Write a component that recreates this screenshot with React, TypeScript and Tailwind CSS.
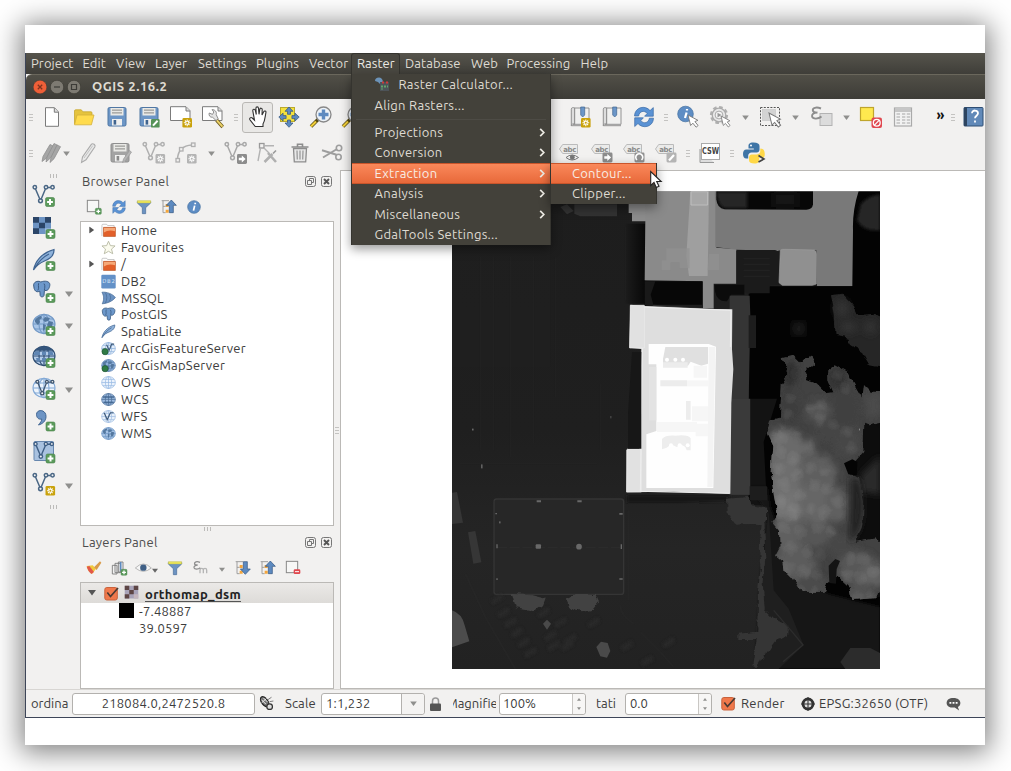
import React from "react";

type Kids = { children?: React.ReactNode };

const Ico = ({ children, className = "w-6 h-6" }: Kids & { className?: string }) => (
  <svg viewBox="0 0 24 24" className={`${className} shrink-0 overflow-visible`} fill="none">
    {children}
  </svg>
);

/* ---------- badges ---------- */
const Plus = ({ x = 14, y = 14, s = 1 }) => (
  <g transform={`translate(${x} ${y}) scale(${s})`}>
    <rect x="0" y="0" width="9" height="9" rx="1.6" fill="#5b9a5b" stroke="#4a834b" strokeWidth=".6" />
    <path d="M4.5 1.6v5.8M1.6 4.5h5.8" stroke="#fff" strokeWidth="2" />
  </g>
);
const Star = ({ x = 14, y = 14, gray = false }) => (
  <g transform={`translate(${x} ${y})`}>
    <rect width="9.6" height="9.6" rx="1.4" fill={gray ? "#b4b4b4" : "#c9a20c"} />
    <path d="M4.8 1.4v6.8M1.4 4.8h6.8M2.5 2.5l4.6 4.6M7.1 2.5L2.5 7.1" stroke="#fff" strokeWidth="1.1" />
    <circle cx="4.8" cy="4.8" r="1" fill={gray ? "#b4b4b4" : "#c9a20c"} />
  </g>
);
const ArrowBadge = ({ x = 13, y = 13 }) => (
  <g transform={`translate(${x} ${y})`}>
    <rect width="10" height="10" rx="1.4" fill="#8c8c8c" />
    <path d="M1.8 3.8h3V1.6L8.6 5 4.8 8.4V6.2h-3z" fill="#fff" />
  </g>
);
const VNodes = ({ c = "#4a6785" }) => (
  <g stroke={c} strokeWidth="1.5" fill="#f2f1f0">
    <path d="M3.3 4.5L8 15.5M9 15.5L13.5 4.8M16 3.6h3.5" fill="none" />
    <circle cx="2.8" cy="3.2" r="1.7" />
    <circle cx="14" cy="3.2" r="1.7" />
    <circle cx="20.5" cy="3.2" r="1.7" />
    <circle cx="8.5" cy="16.8" r="1.9" />
  </g>
);
const Globe = ({ fill = "#dbe8f7", line = "#5b87bd" }) => (
  <g stroke={line} strokeWidth="1.1" fill="none">
    <ellipse cx="12" cy="12" rx="11" ry="9.6" fill={fill} />
    <ellipse cx="12" cy="12" rx="5" ry="9.6" />
    <path d="M1 12h22M3 7h18M3 17h18M12 2.4v19.2" />
  </g>
);

/* ---------- main toolbar icons ---------- */
const NewDoc = () => (
  <Ico>
    <path d="M5.5 2.7h9l4 4.3v14.3h-13z" fill="#fff" stroke="#7b7b7b" />
    <path d="M14.3 3v4.2h4" fill="#ddd" stroke="#7b7b7b" />
  </Ico>
);
const Folder = () => (
  <Ico>
    <path d="M2.5 19V6q0-1.2 1.2-1.2h5.6l1.6 2H19q1 0 1 1.2v2" fill="#e5c33d" stroke="#c8a72e" strokeWidth=".8" />
    <path d="M2.5 19.8L5 10h17l-2.6 9.8z" fill="#ffdb4d" stroke="#d3b03a" strokeWidth=".8" />
  </Ico>
);
const Floppy = ({ gray = false, edit = false }) => {
  const c = gray ? "#a3a3a3" : "#6d96c6";
  return (
    <Ico>
      <rect x="3" y="2.5" width="18" height="18.5" rx="1.5" fill={c} stroke={gray ? "#8f8f8f" : "#4f76a3"} />
      <rect x="5.5" y="3" width="13" height="7.5" fill="#e9e9e6" />
      <path d="M7 5.2h10M7 7.8h10" stroke="#9b9b98" strokeWidth="1.2" />
      <rect x="7" y="14" width="10" height="6.5" fill="#f0f0ef" />
      <rect x="8.6" y="15" width="2.6" height="4.6" fill={gray ? "#8a8a8a" : "#40648f"} />
      {edit && !gray && (
        <g>
          <rect x="14" y="14" width="8.6" height="8.6" rx="1.2" fill="#559258" />
          <path d="M16 20.6l4.6-4.8" stroke="#fff" strokeWidth="2" />
        </g>
      )}
      {gray && <path d="M14.5 21.5l1-3.5 6-8.5 2 1.6-6 8.5z" fill="#b5b5b5" stroke="#999" strokeWidth=".7" />}
    </Ico>
  );
};
const Composer = () => (
  <Ico>
    <path d="M1.5 1.7H17l4 4V15.5H1.5z" fill="#fff" stroke="#7b7b7b" />
    <path d="M17 2v4h4" stroke="#7b7b7b" fill="#ddd" />
    <Star x={13.4} y={13} />
  </Ico>
);
const ComposerMgr = () => (
  <Ico>
    <path d="M1.5 1.7H17l4 4V15.5H1.5z" fill="#fff" stroke="#7b7b7b" />
    <path d="M17 2v4h4" stroke="#7b7b7b" fill="#ddd" />
    <path d="M15.5 15l6.2 7" stroke="#6d5a1c" strokeWidth="3.4" />
    <path d="M15.7 15.2l5.8 6.4" stroke="#edd36a" strokeWidth="2" />
    <path d="M8.2 8l3.3 1.4L12.8 7 11 4.6c3 0 5 2.2 4.2 5l2 4.2-2.2 1.7-3.4-3.2C9 12.5 7.5 10.5 8.2 8z" fill="#e4e4e4" stroke="#777" strokeWidth=".8" />
  </Ico>
);
const Hand = () => (
  <Ico>
    <path
      d="M9.2 21.5L4 14.8c-1-1.4.8-3 2.2-1.8l2.3 2.2L6.8 5.8c-.2-1.9 2.1-2.2 2.5-.4L10.300 9.500 9.900 3.300c0-1.900 2.500-1.900 2.600 0L13 9.300l.8-5c.3-1.700 2.500-1.400 2.400.3L16 10l1.700-3.300c.8-1.400 2.600-.6 2.200.9-.9 4.500-.8 8-2.900 11.400v2.500z"
      fill="#fff" stroke="#333" strokeWidth="1.1" />
  </Ico>
);
const PanTo = () => (
  <Ico>
    <rect x="3.5" y="2.5" width="14" height="14" fill="#f4e13c" stroke="#b9a92e" />
    <g fill="#5d8ac0" stroke="#33557d" strokeWidth=".7">
      <path d="M12 22.3l-4-4.300h2.500v-3h3v3H16z" />
      <path d="M12 2l-4 4.300h2.500v3h3v-3H16z" />
      <path d="M1.800 12.100l4.300-4v2.500h3v3h-3v2.500z" />
      <path d="M22.200 12.100l-4.300-4v2.500h-3v3h3v2.500z" />
    </g>
  </Ico>
);
const ZoomIn = () => (
  <Ico>
    <path d="M2 21.500l7-7" stroke="#54480f" strokeWidth="3.600" />
    <path d="M2 21.500l5-5" stroke="#f2cf38" strokeWidth="2.200" />
    <circle cx="14.500" cy="9.500" r="7.500" fill="#eef3f8" stroke="#888" strokeWidth="1.300" />
    <path d="M14.500 4.500v10M9.500 9.500h10" stroke="#5d8ac0" strokeWidth="3.400" />
  </Ico>
);
const Locker = () => (
  <Ico>
    <path d="M9 18V10a6.500 8 0 0 1 12 0v8" fill="#ececec" stroke="#999" />
    <rect x="13" y="13" width="9.500" height="9.500" fill="#aaa" />
    <path d="M16 15l3 2.700-3 2.800" stroke="#fff" strokeWidth="1.600" />
  </Ico>
);
const Bookmark = ({ star = false }) => (
  <Ico>
    <path d="M3.300 4.200c0-1.800 2-1.800 3.400-1.300V19H5c-1 0-1.700.8-1.700 1.700z" fill="#ddd" stroke="#888" strokeWidth=".9" />
    <path d="M5 19.300h16V3H6.700v16.300M3.300 20.700h17.700" fill="#f0f0ef" stroke="#888" strokeWidth=".9" />
    <path d="M12.700 2h4v8l-2 2-2-2z" fill="#6b96c8" stroke="#41658f" strokeWidth=".7" />
    {star && <Star x={13} y={13} />}
  </Ico>
);
const Refresh = ({ className = "w-6 h-6" }) => (
  <Ico className={className}>
    <g fill="#5a92d4" stroke="#3c6ba6" strokeWidth=".7">
      <path d="M2.500 11C2.800 1.800 13.500-.2 18 5.600l3.300-3v8.600h-8.700l2.700-2.800C12 5 7.500 6 6.600 11z" />
      <path d="M21.500 13.200c-.3 9-11 11-15.500 5.300l-3.300 3v-8.700h8.700l-2.700 2.900c3.300 3.400 7.800 2.400 8.700-2.500z" />
    </g>
  </Ico>
);
const Cursor = ({ t = "translate(12 10)" }) => (
  <path transform={t} d="M0 0l2.600 10.500 2.300-2.300 3.200 4 2-1.700-3.200-3.900 3-1.300z" fill="#fff" stroke="#777" strokeWidth=".9" />
);
const Identify = () => (
  <Ico>
    <circle cx="9.500" cy="9" r="7.800" fill="#5e8dc4" stroke="#44709f" strokeWidth=".7" />
    <path d="M10.600 7.500L9 13M11 4v1.500" stroke="#fff" strokeWidth="2.200" />
    <Cursor />
  </Ico>
);
const Gear = () => (
  <Ico>
    <circle cx="11" cy="10" r="7.800" stroke="#b0b0b0" strokeWidth="2.600" strokeDasharray="3.600 2.500" />
    <circle cx="11" cy="10" r="6.800" fill="#e8e8e8" stroke="#aaa" strokeWidth="1.300" />
    <circle cx="11" cy="10" r="3.900" fill="#f4f4f4" stroke="#aaa" />
    <path d="M9.500 7.800l4 2.300-4 2.300z" fill="#999" />
    <Cursor t="translate(13 11) scale(.9)" />
  </Ico>
);
const SelectRect = () => (
  <Ico>
    <rect x="2.500" y="2.500" width="19" height="18" stroke="#555" strokeDasharray="2 1.300" />
    <rect x="4.500" y="4.500" width="13" height="11" fill="#d3d3d3" stroke="#bbb" strokeWidth=".5" />
    <Cursor t="translate(11 8) scale(1.150)" />
  </Ico>
);
const Eps = ({ className = "w-6 h-6", second = false }) => (
  <Ico className={className}>
    {second ? (
      <path d="M12 20v-5q0-2.500 2.500-2.500t2.500 2.500v5M17 20v-5q0-2.500 2.500-2.500t2.500 2.500v5" stroke="#b5b5b5" strokeWidth="2" />
    ) : (
      <rect x="11" y="8.500" width="12" height="12" fill="#dcdcdc" stroke="#b3b3b3" />
    )}
    <path d="M12 3.500C7 1.500 3.500 3 3.800 5.400 4 7 6 7.700 8.500 7.600 4.500 7.700 2.600 9.500 3.100 11.600c.7 2.600 6 2.800 9.400 0" stroke="#8d8d8d" strokeWidth="1.900" />
  </Ico>
);
const Deselect = () => (
  <Ico>
    <rect x="1.500" y="2.500" width="13" height="13" fill="#ffe94f" stroke="#bfa52c" strokeWidth="1.200" />
    <rect x="12.500" y="12.500" width="10.500" height="10.500" rx="2" fill="#e04850" />
    <circle cx="17.750" cy="17.750" r="3.400" stroke="#fff" strokeWidth="1.300" />
    <path d="M15.400 20.100l4.700-4.700" stroke="#fff" strokeWidth="1.300" />
  </Ico>
);
const Table = () => (
  <Ico>
    <rect x="3.500" y="3" width="17" height="18" fill="#f2f2f2" stroke="#aaa" strokeWidth="1.200" />
    <path d="M4 5.500h16" stroke="#c6c6c6" strokeWidth="3" />
    <path d="M5.500 9h3.500M11 9h3.300M15.800 9h3.300M5.500 12h3.500M11 12h3.300M15.800 12h3.300M5.500 15h3.500M11 15h3.300M15.800 15h3.300M5.500 18h3.500M11 18h3.300M15.800 18h3.300" stroke="#a6a6a6" strokeWidth="1.200" />
  </Ico>
);
const HelpBook = () => (
  <Ico>
    <rect x="3" y="2.500" width="19" height="18.500" rx=".8" fill="#6189b8" stroke="#2f4e74" />
    <rect x="3" y="2.500" width="3" height="18.500" fill="#2d4460" />
    <path d="M11 8.300c0-3.800 6-3.600 6 0 0 2.400-3 2.400-3 5M14 15.500v2" stroke="#fff" strokeWidth="1.800" />
  </Ico>
);

/* ---------- digitizing toolbar icons ---------- */
const Pencils = () => (
  <Ico>
    <g fill="#a6a6a6" stroke="#8f8f8f" strokeWidth=".8">
      <path d="M3 20.500l1-5L11 3.500l3.500 1.700-7 12z" />
      <path d="M7 21l1-5L15 2.500l3.500 1.700-7 12.800z" />
      <path d="M11 21.500l1-5L18 4l3.500 1.700-6.500 12z" />
    </g>
  </Ico>
);
const Pencil = () => (
  <Ico>
    <path d="M5.500 21.500l1-5.500L15.500 3.200q1-1 2.600 0 1.500 1.200.8 2.600L10 18.800z" fill="#e9e9e9" stroke="#aaa" strokeWidth="1.100" />
    <path d="M8 17L16.800 4.600" stroke="#c3c3c3" />
  </Ico>
);
const AddV = () => (
  <Ico>
    <VNodes c="#b0b0b0" />
    <Star x={13.500} y={13} gray />
  </Ico>
);
const Curve = () => (
  <Ico>
    <path d="M3.500 18C4 9 9 4.500 18 4" stroke="#b0b0b0" strokeWidth="1.500" />
    <g fill="#f2f1f0" stroke="#b0b0b0" strokeWidth="1.300">
      <rect x="2" y="17.500" width="3.500" height="3.500" />
      <rect x="17.500" y="2" width="3.500" height="3.500" />
      <rect x="5.500" y="6.500" width="3.500" height="3.500" />
    </g>
    <Star x={13} y={13} gray />
  </Ico>
);
const MoveV = () => (
  <Ico>
    <VNodes c="#a8a8a8" />
    <ArrowBadge x={13} y={13} />
  </Ico>
);
const NodeTool = () => (
  <Ico>
    <rect x="3.500" y="2.500" width="4.500" height="4.500" stroke="#999" strokeWidth="1.300" />
    <path d="M8 4.700h10M4.500 7L2 20M8 7l5 5" stroke="#b3b3b3" strokeWidth="1.400" />
    <path d="M8.500 21l8-8M12 12l8 9" stroke="#b0b0b0" strokeWidth="2.600" />
    <path d="M17 12.500l3-3" stroke="#999" strokeWidth="1.600" />
  </Ico>
);
const Trash = () => (
  <Ico>
    <path d="M5.500 7.500l.8 13.300h11.400l.8-13.300z" fill="#e8e8e8" stroke="#8d8d8d" strokeWidth="1.300" />
    <path d="M3.500 6h17M9.500 5.500V3.300h5v2.200" stroke="#8d8d8d" strokeWidth="1.600" />
    <path d="M9 9.500l.3 9M12 9.500v9M15 9.500l-.3 9" stroke="#9b9b9b" strokeWidth="1.300" />
  </Ico>
);
const Scissors = () => (
  <Ico>
    <path d="M2 9.300l14.500 4.500M3 16.500l14-8.500" stroke="#9e9e9e" strokeWidth="2" />
    <circle cx="19" cy="7" r="2.700" stroke="#9e9e9e" strokeWidth="1.600" />
    <circle cx="18.500" cy="16" r="2.700" stroke="#9e9e9e" strokeWidth="1.600" />
  </Ico>
);
const AbcLabel = ({ kind }: { kind: "eye" | "move" | "rotate" | "edit" }) => (
  <Ico>
    <path d="M1.500 8L4.700 3.500h14.800v9H4.700z" fill="#ebebea" stroke="#bbb" />
    <text x="5.300" y="11" fontSize="7" fontFamily="DejaVu Sans" fontWeight="700" fill="#888" textLength="13">abc</text>
    {kind === "eye" && (
      <g stroke="#777">
        <path d="M8 16.500q6-5 12.500 0-6.500 5-12.500 0z" fill="#f2f2f2" />
        <circle cx="14.300" cy="16.300" r="2" fill="#777" />
      </g>
    )}
    {kind === "move" && <ArrowBadge x={12.500} y={11.500} />}
    {kind === "rotate" && (
      <g>
        <rect x="12.500" y="11.500" width="10" height="10" rx="1.400" fill="#909090" />
        <path d="M15 19a3.500 3.500 0 1 1 4.500 0" stroke="#fff" strokeWidth="1.600" />
      </g>
    )}
    {kind === "edit" && (
      <g>
        <rect x="12.500" y="11.500" width="10" height="10" rx="1.400" fill="#b4b4b4" />
        <path d="M15 19.500l5-5.500" stroke="#fff" strokeWidth="2.200" />
      </g>
    )}
  </Ico>
);
const Csw = () => (
  <Ico>
    <path d="M2 8v13.500h14" fill="#ddd" stroke="#999" />
    <rect x="3.500" y="2.500" width="18" height="16" fill="#fff" stroke="#aaa" />
    <text x="4" y="13.400" fontSize="8" fontFamily="DejaVu Sans" fontWeight="700" fill="#444" textLength="17" lengthAdjust="spacingAndGlyphs">CSW</text>
  </Ico>
);
const Python = () => (
  <Ico>
    <path d="M11.500 1.500c-4.500 0-5 2-5 3.500v2.500h5.300v1H4.500c-2.500 0-3.500 2-3.500 4.500s1 4.500 3.300 4.500h1.900v-2.700c0-2 1.500-3.300 3.400-3.300h5.200c1.500 0 2.700-1.200 2.700-2.800V5c0-2.300-2-3.500-6-3.500z" fill="#3f75a6" />
    <circle cx="9" cy="4.600" r="1" fill="#fff" />
    <path d="M18.300 7.500v2.600c0 2.100-1.500 3.300-3.400 3.300H9.700c-1.500 0-2.700 1.200-2.700 2.800v3c0 2.300 2.200 3.300 5.200 3.300 4.500 0 5-2 5-3.300v-2.400h4c1 0 1.800-2 1.500-4.600-.3-3-1.500-4.700-4.400-4.700z" fill="#ffd848" />
    <path d="M16.500 14.500l5.500 3.500-5.500 3" stroke="#444" strokeWidth="1.600" />
  </Ico>
);

/* ---------- small widgets ---------- */
const Handle = ({ className }: { className: string }) => (
  <div className={`${className} shrink-0 flex flex-col items-center gap-[2px]`}>
    <i className="block w-1 h-px bg-[#c4c3c1]" />
    <i className="block w-1 h-px bg-[#c4c3c1]" />
    <i className="block w-1 h-px bg-[#c4c3c1]" />
  </div>
);
const HHandle = ({ className }: { className: string }) => (
  <div className={`${className} shrink-0 flex justify-center items-center gap-[2px]`}>
    <i className="block h-1 w-px bg-[#bcbbb9]" />
    <i className="block h-1 w-px bg-[#bcbbb9]" />
    <i className="block h-1 w-px bg-[#bcbbb9]" />
  </div>
);
const Caret = ({ className = "w-[7px] h-[5px]", color = "#8f8f8d" }) => (
  <svg viewBox="0 0 8 6" className={`${className} shrink-0`}>
    <path d="M0 .5h8L4 6z" fill={color} />
  </svg>
);
const Tool = ({ children, w = "w-8" }: Kids & { w?: string }) => (
  <div className={`${w} shrink-0 flex items-center justify-center`}>{children}</div>
);

/* ---------- data source icons ---------- */
const RasterTiles = ({ a = "#2b4568", b = "#6d94c4", c = "#9ab9dd" }) => (
  <g>
    <rect x="1" y="1" width="18" height="17" fill={b} />
    <path d="M1 1h6v5.700H1zM13 1h6v5.700h-6zM7 6.700h6v5.600H7zM1 12.300h6V18H1z" fill={a} />
    <path d="M13 12.300h6V18h-6z" fill={c} />
  </g>
);
const Feather = () => (
  <path d="M1.500 22C3 14 9 5 22 1.500c.4 5-3 9-9.500 11.500-4 1.600-7 3-11 9zM3 19.500C7 13 12 8.500 17 6" fill="#8fb2da" stroke="#3f6491" strokeWidth="1.200" />
);
const Elephant = () => (
  <path d="M2 6c1-5 7-5 9-3.500C16 .5 22 1.500 22.300 5.500 22.500 9 20 13 18.500 13l-3 .2-.5 6c-.3 2.500-4.500 2.500-4.800 0L9.800 14C6 15.500 4 14.500 2.600 10.500zM8.300 4c-1 4 1 6-1 9M15 4.500c2 3 .5 6 .5 8" fill="#6d98cb" stroke="#37587f" strokeWidth="1.200" />
);
const Mainland = () => (
  <path d="M3 8q3-4 6-4l1 2-3 2 1 2-2 3-3-3zM13 5l5 1-2 3-3 1-2-2zM17 9l4 1-1 5-3 2-2-4zM11 12l3 1-1 4-2 2z" fill="#54789f" />
);
const sideIcons: [React.ReactNode, boolean][] = [
  [<><VNodes /><Plus x={13.500} y={13.500} /></>, false],
  [<><RasterTiles /><Plus x={14} y={13.500} /></>, false],
  [<><Feather /><Plus x={14} y={13.500} /></>, false],
  [<><g transform="scale(.8)"><Elephant /></g><Plus x={14} y={13.500} /></>, true],
  [<><Globe fill="#a9c6e8" line="#7399c6" /><Mainland /><Plus x={14} y={14.500} /></>, true],
  [<><Globe fill="#b5cdea" line="#2e4d72" /><path d="M3 7.500h5v3.500H1.500zM10 7.500h4V11h-4zM16 7.500h4.500l1 3.500H16zM4 14h4v3.500H5zM10 14h4v3.500h-4z" fill="#5f86b4" /><path d="M3 6.500q4-4.300 9-4.300t9 4.300z" fill="#34557c" /><Plus x={14} y={14.500} /></>, false],
  [<><Globe fill="#edf4fc" line="#84aad6" /><g transform="translate(3 3) scale(.85)"><VNodes c="#3f5670" /></g><Plus x={14} y={14.500} /></>, true],
  [<><path d="M4.500 6.500C4.500 1 14 1 14 8.500 14 13.500 10 16 6.500 17c2-2.500 3.500-4.500 3.200-6C6.500 11.800 4.500 9.500 4.500 6.500z" fill="#6d94c4" stroke="#3f6491" /><Plus x={14} y={14} /></>, false],
  [<><rect x="2" y="1.500" width="19.500" height="19" rx="1" fill="#a9c2e0" stroke="#6787ae" /><g transform="translate(1 1) scale(.92)"><VNodes c="#3f5f85" /></g><Plus x={14} y={14} /></>, false],
  [<><VNodes /><Star x={13.500} y={14} /></>, true],
];

const OrangeFolder = () => (
  <g>
    <path d="M1.500 21V3.500q0-1.500 1.500-1.500h6l1.500 2H21v16" fill="#fff" stroke="#aaa" />
    <path d="M4 7h19v14.500H4z" fill="#e2602a" stroke="#b64a17" />
    <path d="M4.600 8h17.800v5Q12 10 4.600 15z" fill="#f6a877" />
  </g>
);
const GreenDot = () => <circle cx="6.500" cy="17" r="5" fill="#2f7a45" stroke="#1d5230" />;
const treeRows: { label: string; icon: React.ReactNode; arrow?: boolean }[] = [
  { label: "Home", icon: <OrangeFolder />, arrow: true },
  { label: "Favourites", icon: <path d="M12 2l3 7 7.500.5-5.700 5 2 7.500-6.800-4-6.800 4 2-7.500-5.700-5L9 9z" fill="#fbfbee" stroke="#b5b7a0" strokeWidth="1.400" /> },
  { label: "/", icon: <OrangeFolder />, arrow: true },
  { label: "DB2", icon: <><rect x=".5" y="1" width="23" height="22" rx="2" fill="#6391c8" /><text x="2" y="14.500" fontSize="8.500" fontFamily="DejaVu Sans" fill="#dbe8f6" textLength="20">DB2</text></> },
  { label: "MSSQL", icon: <path d="M1.500 2C9 1 19 5 23 10.500 18 17 9 20 2 20.500 5 14 5 8 1.500 2zM7 2.500c3 5 3 11 0 17M13 4.500c3 4 3 8 0 12.500" fill="#6b92c2" stroke="#4a6d98" strokeWidth="1.200" /> },
  { label: "PostGIS", icon: <Elephant /> },
  { label: "SpatiaLite", icon: <Feather /> },
  { label: "ArcGisFeatureServer", icon: <><Globe fill="#e2edf9" line="#8db0da" /><path d="M9 6l4 9 4-10h4" stroke="#3d5878" strokeWidth="1.800" /><GreenDot /></> },
  { label: "ArcGisMapServer", icon: <><Globe fill="#8fb1da" line="#6488b5" /><Mainland /><GreenDot /></> },
  { label: "OWS", icon: <Globe fill="#eaf2fc" line="#94b7e2" /> },
  { label: "WCS", icon: <><Globe fill="#9dbbe0" line="#4d6f98" /><path d="M3 7h18v3H3zM4 15h16v3H5z" fill="#3b5f8a" opacity=".7" /></> },
  { label: "WFS", icon: <><Globe fill="#e8f1fb" line="#9dbbe0" /><path d="M5 6l5 11 5-11h5" stroke="#3d5878" strokeWidth="1.900" /></> },
  { label: "WMS", icon: <><Globe fill="#a5c2e4" line="#6f96c5" /><Mainland /></> },
];

const PanelTitle = ({ title }: { title: string }) => (
  <div className="h-5 flex items-center justify-between pl-[2px] pr-[2px]">
    <span className="text-[13px] text-[#4c4c4c] leading-5 tracking-[0.25px]">{title}</span>
    <span className="flex gap-[5px]">
      <svg viewBox="0 0 11 11" className="w-[11px] h-[11px]" fill="none" stroke="#777">
        <rect x=".5" y=".5" width="10" height="10" rx="2" />
        <path d="M2.500 4.500h4v4h-4zM4.500 4.500v-2h4v4h-2" />
      </svg>
      <svg viewBox="0 0 11 11" className="w-[11px] h-[11px]" fill="none" stroke="#777">
        <rect x=".5" y=".5" width="10" height="10" rx="2" />
        <path d="M3 3l5 5M8 3L3 8" stroke="#555" strokeWidth="1.900" />
      </svg>
    </span>
  </div>
);

const Funnel = () => (
  <>
    <path d="M2 4h20v2l-7.500 7v9h-5v-9L2 6z" fill="#6c93c2" stroke="#476b97" />
    <path d="M2 2.500h20v3.500H2z" fill="#ece65a" stroke="#b7b042" strokeWidth=".6" />
  </>
);
const TreeArrow = ({ down = false }) => (
  <>
    <path d="M1 2.500h11M3 2.500v18h4M3 11h4" stroke="#999" strokeWidth="1.400" />
    <path d="M7 7.500h4.500v4.500H7zM7 16h4.500v4.500H7z" fill="#f4a63c" />
    <path transform={down ? "translate(0 23) scale(1 -1)" : undefined} d="M15.500 1.500l7.500 8h-4.500v11h-6v-11H8z" fill="#5d8ac0" stroke="#2f527c" />
  </>
);
const Info = () => (
  <>
    <circle cx="12" cy="12" r="9.500" fill="#5e8dc4" stroke="#44709f" />
    <path d="M13 10l-1.800 7.500M13.800 5.500v2.500" stroke="#fff" strokeWidth="2.600" />
  </>
);
const Check = () => (
  <svg viewBox="0 0 15 15" className="w-[15px] h-[15px] shrink-0 overflow-visible" fill="none">
    <rect x=".8" y="1.500" width="12.500" height="12.500" rx="2" fill="#f0784b" stroke="#c9623c" />
    <path d="M3.300 6.500l3.200 4L14 2" stroke="#4a3a33" strokeWidth="1.700" />
  </svg>
);

/* ---------- elevation raster ---------- */
const canopy: [number, number, number, number, string][] = [
  [215, 210, 38, 34, "#555"], [120, 200, 34, 60, "#3c3c3c"], [270, 110, 32, 38, "#333"], [125, 95, 24, 40, "#2f2f2f"],
  [290, 210, 40, 50, "#3f3f3f"], [300, 300, 40, 50, "#474747"], [240, 270, 40, 30, "#444"],
  [110, 330, 60, 70, "#6a6a6a"], [120, 430, 60, 80, "#6e6e6e"], [125, 500, 50, 46, "#747474"], [185, 318, 18, 24, "#6a6a6a"],
  [210, 400, 60, 60, "#5f5f5f"], [210, 490, 60, 60, "#666"], [270, 490, 40, 50, "#606060"], [320, 480, 26, 80, "#3c3c3c"],
  [130, 580, 60, 50, "#616161"], [210, 580, 60, 40, "#575757"], [140, 670, 66, 56, "#5c5c5c"], [190, 740, 60, 40, "#4c4c4c"],
  [280, 610, 50, 30, "#464646"], [330, 680, 60, 50, "#585858"], [380, 700, 36, 36, "#636363"], [330, 770, 50, 40, "#525252"],
  [378, 190, 26, 36, "#4c4c4c"], [375, 400, 30, 40, "#333"],
];
const domes: [number, number, number][] = [
  [100, 290, 26], [100, 330, 22], [140, 350, 24], [95, 380, 22], [150, 400, 24], [110, 430, 26], [190, 380, 22],
  [230, 390, 20], [200, 430, 22], [160, 460, 22], [240, 440, 22], [100, 480, 24], [140, 510, 28], [190, 500, 20],
  [230, 510, 24], [270, 480, 22], [110, 560, 20], [160, 570, 24], [210, 560, 22], [250, 570, 20], [130, 620, 24],
  [180, 630, 22], [220, 640, 22], [120, 680, 26], [170, 690, 24], [210, 700, 20], [160, 745, 20], [200, 750, 20],
  [310, 650, 22], [350, 650, 24], [300, 700, 22], [340, 710, 24], [380, 690, 22], [330, 770, 24], [370, 760, 20],
  [190, 200, 18], [220, 190, 22], [220, 230, 22], [130, 170, 20], [120, 220, 20], [270, 100, 20], [290, 140, 20],
  [300, 270, 22], [310, 320, 22], [260, 250, 20],
];
const cars: [number, number][] = [
  [170, 1300], [190, 1330], [210, 1360], [230, 1390], [250, 1420], [290, 1300], [310, 1370], [340, 1330], [370, 1380],
  [440, 1330], [540, 1400], [320, 1400], [150, 1260], [360, 1400], [665, 1390], [600, 1445],
];
const Raster = () => (
  <svg viewBox="35 32 1284 1434" preserveAspectRatio="none" className="w-[428px] h-[478px] block">
    <defs>
      <filter id="soft"><feGaussianBlur stdDeviation="12" /></filter>
      <filter id="softer"><feGaussianBlur stdDeviation="4" /></filter>
      <filter id="canopyBlur" x="-20%" y="-20%" width="140%" height="140%"><feGaussianBlur stdDeviation="11" /></filter>
      <filter id="ragged" x="-5%" y="-5%" width="110%" height="110%">
        <feTurbulence type="fractalNoise" baseFrequency=".035" numOctaves="2" seed="4" result="n" />
        <feDisplacementMap in="SourceGraphic" in2="n" scale="20" xChannelSelector="R" yChannelSelector="G" />
      </filter>
      <linearGradient id="ground" x1="0" y1="0" x2="0" y2="1">
        <stop offset="0" stopColor="#1d1d1d" /><stop offset=".5" stopColor="#1f1f1f" />
        <stop offset=".75" stopColor="#252525" /><stop offset="1" stopColor="#222" />
      </linearGradient>
      <linearGradient id="edge" x1="0" y1="0" x2="1" y2="0">
        <stop offset="0" stopColor="#1c1c1c" /><stop offset="1" stopColor="#080808" />
      </linearGradient>
      <radialGradient id="dome">
        <stop offset="0" stopColor="#fff" stopOpacity=".07" /><stop offset=".7" stopColor="#fff" stopOpacity=".035" /><stop offset="1" stopColor="#fff" stopOpacity="0" />
      </radialGradient>
      <clipPath id="trees">
        <path d="M105 50l30-8 20 20 35-20 15 23-33 25 6 25 27 10 30 30 23-3-18-42v-25l22-17 38 22 25 45 20 35 5-40 20 20 30 0 6 90-40 8-15-5-3 85-28 32-25 5 10 30 30 15 15 70-5 70-20 50 60-10 5 10h23v135l-33 35-65 5-8-35-37-35-28 20-10 25h-67l-25-40-30-15-5-35-22-18 17-32-2-40-26-30 18-25-10-50-10-75 5-80-17-35 12-40 25-7 5-98 25-35z" />
      </clipPath>
    </defs>
    <rect x="35" y="32" width="1284" height="1434" fill="url(#ground)" />
    <path d="M35 32H330V560H35z" fill="#202020" opacity=".7" />
    <path d="M555 130h60v240h-60z" fill="url(#edge)" />
    <g stroke="#2a2a2a" strokeWidth="2" fill="none" opacity=".4">
      <path d="M120 230v580M160 230v580M210 230v600M280 230v560M345 230v420M480 610v200M555 140v220M60 850h410M100 935h450" />
    </g>
    {/* dark ground on the right */}
    <path d="M925 340l65-22H1235V32H1319V1466H1000L960 1200 985 980 925 960z" fill="#030303" />
    <path d="M930 655h80l-40 130 10 190h-50z" fill="#131313" />
    <path d="M925 920h55l10 60 60 170 110 90 159 40V1466H945L960 1200 980 990z" fill="#171717" filter="url(#softer)" />
    <path d="M985 990l15 240 45 55 45 110-75 71H945l20-300z" fill="#1f1f1f" />
    <circle cx="1075" cy="445" r="20" fill="#242424" filter="url(#soft)" />
    <path d="M1235 730h84v520h-84z" fill="#101010" filter="url(#soft)" />
    {/* upper buildings */}
    <path d="M565 60h55v63h-45v-25h-10z" fill="#8c8c8c" />
    <path d="M402 72h128v36H420l-18-8zM360 80l20-8 20 20-20 10z" fill="#333" />
    <path d="M616 32h212v170l60 4v104h-68v75h-32v-82l-175-3z" fill="#8a8a8a" />
    <path d="M825 32H1255Q1236 90 1238 150L1236 317H1130L1128 210H1020L1012 212 890 208 825 200z" fill="#797979" />
    <path d="M750 32h56l-4 255h-56l-8-60z" fill="#9f9f9f" />
    <path d="M752 34h50v40h-50z" fill="#a8a8a8" stroke="#bdbdbd" strokeWidth="3" />
    <path d="M664 270v-30h14v-36h70v60h-30v-18h-28v24zM806 220h30v50h-34z" fill="#929292" opacity=".7" />
    <path d="M828 32h290v40q-2 16-20 16l-245-1q-22-2-25-30z" fill="#070707" />
    <path d="M830 34h90v50h-65q-20-4-25-40z" fill="#252525" filter="url(#softer)" />
    <path d="M1000 36h70v44h-70z" fill="#141414" filter="url(#soft)" />
    <path d="M1262 70Q1290 42 1319 44V150Q1270 155 1250 120z" fill="#262626" filter="url(#softer)" />
    <path d="M888 212q4-3 14-3h102q13 3 14 14v90l-30 2v24h-70l-30-28z" fill="#1b1b1b" />
    <path d="M910 235h78M910 252h78M910 270h78M910 288h78" stroke="#212121" strokeWidth="4" />
    <path d="M1020 210q4-4 14-3l88 2q6 2 6 12v90l-12 4h-90l-10-8z" fill="#909090" stroke="#9d9d9d" strokeWidth="2" />
    <path d="M613 303h172v70H640l-28 4z" fill="#070707" />
    <path d="M613 303h32l-14 40 9 33h-27z" fill="#191919" />
    <path d="M822 313h90v30h-40l-12 20q-30 2-36-30z" fill="#0b0b0b" />
    <path d="M868 346h60l2 60-5 255 4 282h-62z" fill="#353535" />
    <path d="M868 655h62v288h-62z" fill="#3a3a3a" />
    <path d="M925 405h22v98h-22zM928 918h52v42h-52z" fill="#1d1d1d" />
    <path d="M640 373l175 12 58 3v12H612z" fill="#303030" />
    {/* bright tower */}
    <path d="M570 373l42 4 205 9 59 1-1 120 4 60-6 100-3 273-170-6-142 2V808h39l6-302-36-4z" fill="#dedede" />
    <path d="M570 375h42v128h-44zM561 806h42v129h-44z" fill="#e1e1e1" stroke="#ececec" strokeWidth="2" />
    <path d="M606 503l-6 430 268 6M612 380l260 10-2 110" stroke="#efefef" strokeWidth="3" fill="none" />
    <path d="M625 491h180l22 8-8 424H618V762l30-10V552h-23z" fill="#fefefe" />
    <path d="M805 500h20l-8 420h-16z" fill="#f4f4f4" />
    <path d="M675 500h128v50l-20 6-32-12-8 12h-75v-20z" fill="#e0e0e0" />
    <path d="M668 546h74v16h-74zM660 600h80v18H660z" fill="#ececec" />
    <path d="M740 600h64v18h-64z" fill="#f6f6f6" />
    <path d="M737 662h14v56h-14zM665 776q10-12 40-10 40-4 46 8v36h-12l-4-10-14-8-12 8-16-8-14 10-14 5z" fill="#ededed" />
    <path d="M755 678h49v45h-49zM766 730h38v38h-38zM760 556h40v36h-40zM650 725h120v30h-120z" fill="#f6f6f6" />
    <path d="M626 560h22v160h-22z" fill="#e3e3e3" />
    <g fill="#fff"><circle cx="680" cy="538" r="6" /><circle cx="705" cy="538" r="6" /><circle cx="728" cy="538" r="6" /><circle cx="692" cy="795" r="6" /><circle cx="718" cy="795" r="6" /><circle cx="742" cy="795" r="6" /></g>
    <path d="M560 944h310v18l-150 6-160 0z" fill="#191919" filter="url(#softer)" />
    <path d="M575 515h28v290h-40V700z" fill="#171717" />
    {/* trees */}
    <g filter="url(#ragged)">
      <path d="M1172 345l35-5 28 30 15 35 50-5 30 15V560l-45-10-20-35-35-20-20-30-25-5-2-60z" fill="#262626" />
    </g>
    <g fill="#303030" filter="url(#canopyBlur)"><ellipse cx="1205" cy="385" rx="22" ry="28" /><ellipse cx="1225" cy="440" rx="28" ry="18" /><ellipse cx="1290" cy="440" rx="20" ry="22" /></g>
    <g transform="translate(921 484)">
      <path d="M330 450l10-50 60-60v120l-30-6z" fill="#2c2c2c" filter="url(#canopyBlur)" />
      <g filter="url(#ragged)">
        <g clipPath="url(#trees)">
          <rect x="0" y="0" width="420" height="840" fill="#424242" />
          <g filter="url(#canopyBlur)">
            {canopy.map(([x, y, rx, ry, f]) => <ellipse key={`${x}-${y}`} cx={x} cy={y} rx={rx} ry={ry} fill={f} />)}
          </g>
          {domes.map(([x, y, r]) => <circle key={`${x}-${y}`} cx={x} cy={y} r={r} fill="url(#dome)" />)}
        </g>
      </g>
      <path d="M335 410q20 70 10 120-10 60-40 70 10-100 5-190z" fill="#202020" filter="url(#canopyBlur)" />
      <path d="M244 672l20-20 14 6-10 24-2 44-20-2z" fill="#141414" />
      <path d="M290 365l25-12 15 8-2 40-25-3z" fill="#040404" />
    </g>
    <path d="M1312 32h7v1434h-7z" fill="none" />
    {/* lower vegetation strip */}
    <path filter="url(#ragged)" d="M860 955l65-5 10 25 45 10v32l-8 8 3 110-8 70 6 80 30 30 46 26-4 26-40 14-20 28-36 50h-10l10-80h-58v-22l60-6 2-120 8-60-6-80 6-56-40-4-35 2-24-32z" fill="#343434" />
    <path d="M1000 1290l60 70 28 34-60 50" stroke="#2c2c2c" strokeWidth="4" fill="none" />
    <path d="M1200 1445l30-42 60 0 29 15v48H1215z" fill="#2c2c2c" />
    {/* sports court */}
    <rect x="161" y="956" width="389" height="286" rx="8" fill="#272727" stroke="#353535" strokeWidth="4" />
    <path d="M170 1101h370" stroke="#303030" strokeWidth="2" strokeDasharray="30 8" />
    <g fill="#686868">
      <rect x="286" y="1092" width="16" height="13" rx="3" /><circle cx="416" cy="1099" r="8.500" />
      <path d="M289 960h13v6h-13zM411 960h13v6h-13zM168 1092h4v12h-4zM541 1092h4v14h-4zM537 998h10v5h-10zM165 998h5v4h-5zM537 1194h10v4h-10zM168 1194h4v5h-4z" />
    </g>
    <path filter="url(#ragged)" d="M214 1238l60 4 42 10-10 28-35 12-45-8zM374 1259l35-18 60 0 10 22-20 25-35 8-40-12z" fill="#434343" />
    <path d="M35 937l15-2 18 92-33 4zM83 1056l22-4 18 94-24 4z" fill="#363636" />
    <path d="M35 1290q30 10 38 45l14 48-52 18z" fill="#4c4c4c" />
    <path d="M468 1400l14-16 20 4 8 24-10 20-20-4zM308 1330l12-12 12 12-12 18z" fill="#4a4a4a" />
    <g fill="#2c2c2c" opacity=".8" filter="url(#softer)">
      {cars.map(([x, y]) => <rect key={`${x}-${y}`} x={x} y={y} width="38" height="16" transform={`rotate(-32 ${x} ${y})`} />)}
    </g>
    <path d="M75 1180l60 130 90 156M600 1355l60 60 40 45M540 1275q0 30 40 55M565 990v270" stroke="#2a2a2a" strokeWidth="3" fill="none" />
    <g fill="#fff"><rect x="96" y="746" width="3" height="3" /><rect x="1257" y="746" width="3" height="3" /></g>
    <g fill="#888"><rect x="123" y="852" width="3" height="12" /><rect x="177" y="1023" width="3" height="6" /><rect x="510" y="708" width="3" height="6" fill="#555" /></g>
    <path d="M35 33h1284" stroke="#aaa" strokeWidth="2" opacity=".6" />
  </svg>
);

/* ---------- menus ---------- */
const menuBar: [string, string][] = [
  ["Project", "w-[51.500px]"], ["Edit", "w-[33.500px]"], ["View", "w-[39px]"],
  ["Layer", "w-[43px]"], ["Settings", "w-[58px]"], ["Plugins", "w-[53px]"],
  ["Vector", "w-[43px]"],
];
const menuBar2: [string, string][] = [
  ["Database", "w-[66px]"], ["Web", "w-[35.500px]"], ["Processing", "w-[74px]"], ["Help", "w-[40px]"],
];
const MenuItem = ({ label, sub, active, icon, pad = "pl-[22.500px]" }: { label: string; sub?: boolean; active?: boolean; icon?: boolean; pad?: string }) => (
  <div className={`h-[20.5px] flex items-center ${pad} pr-[5px] ${active ? "bg-linear-to-b from-[#fa885a] to-[#e8693a] border-y border-[#c9552b] text-[#f8ece4]" : ""}`}>
    {icon && (
      <svg viewBox="0 0 15 15" className="w-[15px] h-[15px] mr-[9px]">
        <path d="M0 4q0-3.500 4-3.500 3 0 4 4L5 7 3 5z" fill="#6c93b8" />
        <rect x="5" y="5" width="9" height="9" fill="#4d5358" />
        <path d="M7 4.500h2v2H7zM11 4.500h2v2h-2z" fill="#d0393b" />
        <path d="M6 8.500h2v2H6zM9 8.500h2v2H9zM12 8.500h1v2h-1zM6 11.500h2v1H6z" fill="#63a56c" />
      </svg>
    )}
    <span className="flex-1 whitespace-nowrap tracking-[0.28px]">{label}</span>
    {sub && (
      <svg viewBox="0 0 6 10" className="w-[6px] h-[9px]" fill="none" stroke="#eceae3" strokeWidth="1.900">
        <path d="M1 1l4 4-4 4" />
      </svg>
    )}
  </div>
);

/* ---------- status bar ---------- */
const Field = ({ children, className }: Kids & { className: string }) => (
  <div className={`${className} shrink-0 h-[22px] flex items-center bg-white border border-[#b3b1ae] rounded-[3px] whitespace-nowrap`}>{children}</div>
);
const Spin = () => (
  <div className="ml-auto w-[13px] h-full flex flex-col items-center justify-center gap-[6px] border-l border-[#c9c7c4] bg-[#f7f6f5] rounded-r-[3px]">
    <Caret className="w-[4px] h-[3px] rotate-180" />
    <Caret className="w-[4px] h-[3px]" />
  </div>
);

export default function App() {
  return (
    <div className="w-[1011px] h-[771px] bg-white overflow-hidden p-[25px] font-['Ubuntu','Noto_Sans',sans-serif] text-[13px] text-[#3c3c3c]">
      <div className="relative w-[960px] h-[720px] bg-white pt-[28px] shadow-[0_3px_26px_4px_rgba(0,0,0,0.5)]">
        <div className="h-[665px] flex flex-col overflow-hidden border-l border-b border-[#3d4558] bg-[#f2f1f0]">
          {/* menu bar */}
          <div className="-ml-px h-[21px] shrink-0 flex items-center pl-[6px] bg-linear-to-b from-[#56544c] to-[#3f3e39] text-[#dfdbd2] leading-[18px]">
            {menuBar.map(([t, w]) => <span key={t} className={`${w} shrink-0 pb-[2px] tracking-[0.1px]`}>{t}</span>)}
            <span className="w-[48.500px] -ml-px h-full shrink-0 pl-[5px] mr-[5.500px] rounded-t-[3px] border border-b-0 border-[#35342f] bg-[#4a4841] text-[#eceae3]">Raster</span>
            {menuBar2.map(([t, w]) => <span key={t} className={`${w} shrink-0 pb-[2px] tracking-[0.1px]`}>{t}</span>)}
          </div>
          {/* title bar */}
          <div className="h-[25px] shrink-0 flex items-center pl-[7px] gap-[3px] border-t border-[#6a675c] bg-linear-to-b from-[#514f47] to-[#3d3c37] rounded-tl-md">
            <svg viewBox="0 0 48 14" className="w-[48px] h-[14px]">
              <circle cx="7" cy="7" r="6.800" fill="#ee5f38" stroke="#38352f" strokeWidth=".4" />
              <path d="M4.800 4.800l4.400 4.400M9.200 4.800L4.800 9.200" stroke="#7c3420" strokeWidth="1.300" />
              <circle cx="24" cy="7" r="6.700" fill="#7d7a72" stroke="#38352f" strokeWidth=".6" />
              <path d="M21 7h6" stroke="#3c3b37" strokeWidth="1.200" />
              <circle cx="41" cy="7" r="6.700" fill="#7d7a72" stroke="#38352f" strokeWidth=".6" />
              <path d="M38.500 4.500h5v5h-5z" fill="none" stroke="#3c3b37" strokeWidth="1.200" />
            </svg>
            <span className="pl-[8px] text-[13px] font-bold tracking-[0.55px] text-[#dfdbd2]">QGIS 2.16.2</span>
          </div>
          {/* main toolbar */}
          <div className="h-[36px] shrink-0 flex items-center text-[#111]">
            <Handle className="w-[10px]" />
            <Tool><NewDoc /></Tool>
            <Tool><Folder /></Tool>
            <Tool w="ml-[0.5px] w-8"><Floppy /></Tool>
            <Tool w="ml-[0.5px] w-8"><Floppy edit /></Tool>
            <Tool><Composer /></Tool>
            <Tool><ComposerMgr /></Tool>
            <Handle className="w-[13px]" />
            <div className="w-[31px] h-[31px] shrink-0 flex items-center justify-center rounded-[3px] border border-[#bab8b5] bg-[#e9e8e6]"><Hand /></div>
            <Tool><PanTo /></Tool>
            <Tool><ZoomIn /></Tool>
            <Tool><ZoomIn /></Tool>
            <Tool w="ml-[155px] w-8"><Locker /></Tool>
            <Tool w="ml-[8px] w-8"><Bookmark star /></Tool>
            <Tool><Bookmark /></Tool>
            <Tool><Refresh /></Tool>
            <Handle className="w-[12px]" />
            <Tool><Identify /></Tool>
            <Tool><Gear /></Tool>
            <Tool w="w-[18px]"><Caret /></Tool>
            <Tool><SelectRect /></Tool>
            <Tool w="w-[19px]"><Caret /></Tool>
            <Tool><Eps /></Tool>
            <Tool w="w-[18px]"><Caret /></Tool>
            <Tool><Deselect /></Tool>
            <Tool><Table /></Tool>
            <span className="ml-[13px] w-[17px] shrink-0 text-center font-bold text-[14px] leading-4 -mt-1">»</span>
            <Handle className="w-[8px]" />
            <Tool><HelpBook /></Tool>
          </div>
          {/* digitizing toolbar */}
          <div className="h-[36px] shrink-0 flex items-center">
            <Handle className="w-[10px]" />
            <Tool w="w-[30px]"><Pencils /></Tool>
            <Tool w="-ml-[4px] w-[9px]"><Caret /></Tool>
            <Tool w="ml-px w-8"><Pencil /></Tool>
            <Tool><Floppy gray /></Tool>
            <Tool w="ml-[2px] w-8"><AddV /></Tool>
            <Tool><Curve /></Tool>
            <Tool w="w-[18px]"><Caret /></Tool>
            <Tool><MoveV /></Tool>
            <Tool><NodeTool /></Tool>
            <Tool><Trash /></Tool>
            <Tool><Scissors /></Tool>
            <Tool w="ml-[206px] w-8"><AbcLabel kind="eye" /></Tool>
            <Tool><AbcLabel kind="move" /></Tool>
            <Tool><AbcLabel kind="rotate" /></Tool>
            <Tool><AbcLabel kind="edit" /></Tool>
            <Handle className="w-[12px]" />
            <Tool><Csw /></Tool>
            <Handle className="w-[12px]" />
            <Tool><Python /></Tool>
          </div>
          {/* work area */}
          <div className="h-[518px] shrink-0 flex">
            <div className="w-[54px] shrink-0 flex flex-col">
              <HHandle className="h-[9px]" />
              {sideIcons.map(([icon, more], i) => (
                <div key={i} className="h-8 flex items-center pl-[6px] gap-[9px]">
                  <Ico>{icon}</Ico>
                  {more && <Caret className="w-[8px] h-[6px] mt-1" />}
                </div>
              ))}
              <HHandle className="h-[14px]" />
            </div>
            <div className="w-[254px] shrink-0 flex flex-col">
              <PanelTitle title="Browser Panel" />
              <div className="h-[30px] flex items-center pl-[6px] pt-px gap-[9px]">
                <Ico className="w-4 h-4"><rect x="2" y="2" width="17" height="17" fill="#f7f7f6" stroke="#888" strokeWidth="1.500" /><Plus x={14} y={14} /></Ico>
                <Refresh className="w-4 h-4" />
                <Ico className="w-4 h-4"><Funnel /></Ico>
                <Ico className="w-4 h-4"><TreeArrow /></Ico>
                <Ico className="w-4 h-4"><Info /></Ico>
              </div>
              <div className="h-[305px] bg-white border border-[#bbb9b6]">
                {treeRows.map((r, i) => (
                  <div key={i} className="h-[16.9px] flex items-center pl-[7px]">
                    <span className="w-[13px] shrink-0">{r.arrow && <Caret className="w-[7px] h-[6px] -rotate-90" color="#555" />}</span>
                    <Ico className="w-[15px] h-[15px]">{r.icon}</Ico>
                    <span className="pl-[5px] text-[13px] leading-[17px] tracking-[0.27px] whitespace-nowrap">{r.label}</span>
                  </div>
                ))}
              </div>
              <HHandle className="h-[6px]" />
              <PanelTitle title="Layers Panel" />
              <div className="h-[30px] flex items-center pl-[6px] pt-[2px]">
                <Ico className="w-4 h-4"><path d="M1 9l9-1 5 5-6 8Q3 18 1 9z" fill="#f0c93c" /><path d="M1 10l4-1 7 9-4 3Q3 17 1 10z" fill="#e2574a" /><path d="M12 11L21 2l2 2-7 11z" fill="#d99b4a" /></Ico>
                <Ico className="w-4 h-4 ml-[9px]"><path d="M2 8h7v13H2zM6 5h8v14H6zM11 3h7v15h-7z" fill="#f2f2f2" stroke="#777" strokeWidth="1.300" /><path d="M14.500 16V3" stroke="#5d8ac0" strokeWidth="2.500" /><Plus x={15} y={14} /></Ico>
                <Ico className="w-4 h-4 ml-[9px]"><path d="M-1 12q12-12 24 0-12 10-24 0z" fill="#f5f5f5" stroke="#999" /><circle cx="11" cy="11.500" r="4.800" fill="#3f5f85" /></Ico>
                <Caret className="w-[6px] h-[5px] mt-[5px]" color="#666" />
                <Ico className="w-4 h-4 ml-[9px]"><Funnel /></Ico>
                <Eps className="w-4 h-4 ml-[9px]" second />
                <Caret className="w-[6px] h-[5px] ml-[11px] mt-[3px]" />
                <Ico className="w-4 h-4 ml-[10px]"><TreeArrow down /></Ico>
                <Ico className="w-4 h-4 ml-[9px]"><TreeArrow /></Ico>
                <Ico className="w-4 h-4 ml-[9px]"><rect x="2" y="2" width="17" height="17" fill="#f7f7f6" stroke="#888" strokeWidth="1.500" /><rect x="13" y="14" width="10" height="7" rx="2" fill="#e0484e" /><path d="M15 17.500h6" stroke="#fff" strokeWidth="1.500" /></Ico>
              </div>
              <div className="h-[107px] bg-white border border-[#bbb9b6]">
                <div className="h-[20px] flex items-center pl-[7px] bg-linear-to-b from-[#ebe9e7] to-[#dddbd8]">
                  <Caret className="w-[8px] h-[7px] -mt-[2px]" color="#555" />
                  <span className="pl-[8px]"><Check /></span>
                  <Ico className="w-[18px] h-[18px] ml-[5px] mt-[2px]"><RasterTiles a="#5d4544" b="#a8a3b8" c="#c5b6bd" /></Ico>
                  <span className="ml-[3px] mt-[2px] font-bold text-[13px] leading-[14px] tracking-[0.35px] border-[#555] border-b text-[#222]">orthomap_dsm</span>
                </div>
                <div className="h-[17px] flex items-center pl-[38px] text-[13px] tracking-[0.2px]"><i className="block w-[15px] h-[15px] -mt-[2px] bg-black mr-[5px]" />-7.48887</div>
                <div className="h-[17px] flex items-center pl-[58px] text-[13px] tracking-[0.2px]">39.0597</div>
              </div>
            </div>
            <div className="w-[6px] shrink-0 flex items-center"><Handle className="w-[6px]" /></div>
            <div className="flex-1 bg-white border border-r-0 border-[#bbb9b6] -mt-px pl-[110.700px] pt-[19.700px]">
              <Raster />
            </div>
          </div>
          {/* status bar */}
          <div className="flex-1 flex items-center border-t border-[#d8d6d3] pl-[5px] whitespace-nowrap">
            <span className="w-[38px] shrink-0 overflow-hidden">ordina</span>
            <Field className="ml-[3px] w-[183px] justify-center tracking-[0.22px]">218084.0,2472520.8</Field>
            <Ico className="w-[15px] h-[15px] ml-[4px]"><ellipse cx="9" cy="9" rx="5" ry="9" transform="rotate(-35 9 9)" fill="#777" stroke="#222" strokeWidth="2" /><path d="M4 6l7 7M7 3l7 7M4 11l8-7" stroke="#eee" strokeWidth="1.500" /><circle cx="17" cy="17" r="4.500" fill="#ddd" stroke="#333" strokeWidth="2" /><path d="M14 6l6-4M17 9l6-1" stroke="#777" strokeWidth="1.500" /></Ico>
            <span className="ml-[11px] w-[31px] shrink-0 tracking-[0.15px]">Scale</span>
            <Field className="ml-[5px] w-[104px] pl-[4px] tracking-[0.2px]">
              1:1,232
              <div className="ml-auto w-[23px] h-full flex items-center justify-center border-l border-[#b3b1ae] bg-[#f4f3f2] rounded-r-[3px]"><Caret /></div>
            </Field>
            <svg viewBox="0 0 11 14" className="w-[11px] h-[14px] ml-[5px] shrink-0"><path d="M2.500 7V4a3 3 0 0 1 6 0v3" fill="none" stroke="#999" strokeWidth="1.500" /><rect y="6.500" width="11" height="7.500" rx="1" fill="#555" /></svg>
            <span className="ml-[12px] w-[43px] shrink-0 overflow-hidden flex justify-center">Magnifier</span>
            <Field className="ml-[3px] w-[87px] pl-[3px]">100%<Spin /></Field>
            <span className="ml-[9px] w-[22px] shrink-0 flex justify-center">tati</span>
            <Field className="ml-[8px] w-[87px] pl-[4px]">0.0<Spin /></Field>
            <span className="ml-[9px] shrink-0"><Check /></span>
            <span className="ml-[5px] w-[45px] shrink-0 tracking-[0.2px]">Render</span>
            <Ico className="w-[14px] h-[14px] ml-[15px]"><circle cx="12" cy="12" r="8.500" stroke="#333" strokeWidth="5" /><circle cx="12" cy="12" r="5.500" fill="#ddd" /><path d="M12 0v24M0 12h24" stroke="#333" strokeWidth="1.800" /></Ico>
            <span className="ml-[4px] w-[111px] shrink-0 tracking-[0.25px]">EPSG:32650 (OTF)</span>
            <Ico className="w-[15px] h-[15px] ml-[16px]"><path d="M12 3c7 0 11 3.500 11 8 0 3-1.500 5-4 6.500L21 23l-7-4.500C6 19 1 16 1 11s4-8 11-8z" fill="#555" /><path d="M5.500 11h3M10.500 11h3M15.500 11h3" stroke="#fff" strokeWidth="2.600" /></Ico>
          </div>
        </div>

        {/* open menu */}
        <div className="absolute left-[326px] top-[49px] w-[200px] h-[171px] pt-[0.5px] bg-[#43413a] border-x border-[#35342f] text-[#dfdbd2] text-[13px] shadow-[0_4px_10px_rgba(0,0,0,0.4)]">
          <MenuItem label="Raster Calculator..." icon />
          <MenuItem label="Align Rasters..." />
          <div className="h-[6.5px] pt-[3px] px-1"><div className="h-px bg-[#4d4b45]" /></div>
          <MenuItem label="Projections" sub />
          <MenuItem label="Conversion" sub />
          <MenuItem label="Extraction" sub active />
          <MenuItem label="Analysis" sub />
          <MenuItem label="Miscellaneous" sub />
          <MenuItem label="GdalTools Settings..." />
        </div>
        <div className="absolute left-[525px] top-[138px] w-[107px] h-[41px] bg-[#43413a] border-x border-[#35342f] text-[#dfdbd2] text-[13px] shadow-[0_4px_10px_rgba(0,0,0,0.4)]">
          <MenuItem label="Contour..." active pad="pl-[21px]" />
          <MenuItem label="Clipper..." pad="pl-[21px]" />
        </div>
        <svg viewBox="0 0 12 18" className="absolute left-[625px] top-[146px] w-[12px] h-[18px] overflow-visible">
          <path d="M.7.500v14l3.300-3 2.300 5 2.700-1.200-2.300-4.800h4.500z" fill="#fff" stroke="#222" strokeWidth="1.100" />
        </svg>
      </div>
    </div>
  );
}
